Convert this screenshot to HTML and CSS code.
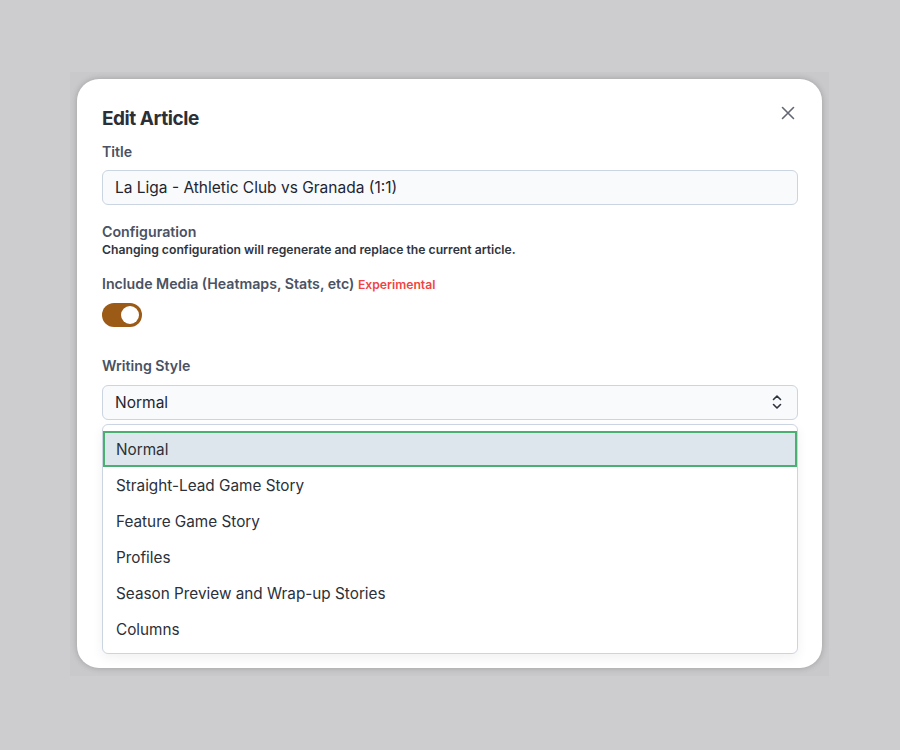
FILE: index.html
```html
<!DOCTYPE html>
<html>
<head>
<meta charset="utf-8">
<link rel="stylesheet" href="styles.css">
</head>
<body>
<div class="backdrop">
  <div class="modal">
    <div class="modal-head">
      <h2 class="modal-title">Edit Article</h2>
      <button class="close" aria-label="Close">
        <svg width="16" height="16" viewBox="0 0 16 16"><path d="M2.5 2.5 L13.5 13.5 M13.5 2.5 L2.5 13.5" stroke="#626873" stroke-width="1.6" stroke-linecap="round" fill="none"/></svg>
      </button>
    </div>

    <label class="label lbl-title">Title</label>
    <div class="input">La Liga - Athletic Club vs Granada (1:1)</div>

    <div class="section">
      <div class="label">Configuration</div>
      <div class="hint">Changing configuration will regenerate and replace the current article.</div>
    </div>

    <div class="label lbl-media">Include Media (Heatmaps, Stats, etc) <span class="exp">Experimental</span></div>
    <div class="toggle"><span class="knob"></span></div>

    <div class="label lbl-style">Writing Style</div>
    <div class="select">
      <span>Normal</span>
      <svg width="12" height="18" viewBox="0 0 12 18"><path d="M2.5 6.5 L6 3 L9.5 6.5 M2.5 11.5 L6 15 L9.5 11.5" stroke="#2f343d" stroke-width="1.6" stroke-linecap="round" stroke-linejoin="round" fill="none"/></svg>
    </div>
    <ul class="options">
      <li class="opt active">Normal</li>
      <li class="opt">Straight-Lead Game Story</li>
      <li class="opt">Feature Game Story</li>
      <li class="opt">Profiles</li>
      <li class="opt">Season Preview and Wrap-up Stories</li>
      <li class="opt">Columns</li>
    </ul>
  </div>
</div>
</body>
</html>
```

FILE: styles.css
```css
* { box-sizing: border-box; }
html, body { margin: 0; padding: 0; }
body {
  width: 900px;
  height: 750px;
  background: #cdcdcf;
  font-family: Inter, "Noto Sans", "Liberation Sans", sans-serif;
  overflow: hidden;
}
.backdrop {
  margin: 72px 0 0 70px;
  width: 759px;
  height: 604px;
  background: #c9c9cb;
  padding: 7px 7px 8px 7px;
}
.modal {
  background: #fff;
  border-radius: 22px;
  height: 589px;
  padding: 26px 24px 14px 25px;
  box-shadow: 0 0 6px rgba(0,0,0,0.22);
  display: flex;
  flex-direction: column;
}
.modal-head {
  display: flex;
  justify-content: space-between;
  align-items: flex-start;
}
.modal-title {
  margin: 0;
  font-size: 19px;
  line-height: 28px;
  font-weight: 700;
  color: #2b2f37;
  letter-spacing: -0.45px;
}
.close {
  border: 0;
  background: none;
  padding: 0;
  margin: 0 2px 0 0;
  width: 16px;
  height: 16px;
  display: block;
}
.close svg { display: block; }
.label {
  font-size: 14.2px;
  line-height: 20px;
  font-weight: 600;
  color: #4a5263;
}
.lbl-title { margin-top: 9px; display: block; }
.input {
  margin-top: 8px;
  height: 36px;
  border: 1px solid #cbd5e1;
  border-radius: 6px;
  background: #f8fafc;
  padding: 0 12px;
  display: flex;
  align-items: center;
  font-size: 15.5px;
  color: #1f2530;
}
.section { margin-top: 17px; }
.hint {
  font-size: 12.2px;
  line-height: 16px;
  font-weight: 600;
  color: #2f3540;
}
.lbl-media { margin-top: 16px; }
.exp {
  color: #ef4444;
  font-size: 12.2px;
  font-weight: 600;
}
.toggle {
  margin-top: 8px;
  width: 40px;
  height: 24px;
  border-radius: 12px;
  background: #9b5a16;
  display: flex;
  justify-content: flex-end;
  align-items: center;
  padding: 0 3px;
}
.knob {
  width: 18px;
  height: 18px;
  border-radius: 50%;
  background: #fff;
}
.lbl-style { margin-top: 29px; }
.select {
  margin-top: 9px;
  height: 36px;
  border: 1px solid #cbd5e1;
  border-radius: 6px;
  background: #f8fafc;
  padding: 0 14px 0 12px;
  display: flex;
  align-items: center;
  justify-content: space-between;
  font-size: 15.5px;
  color: #1f2530;
}
.select svg { display: block; }
.options {
  list-style: none;
  margin: 4px 0 0 0;
  padding: 6px 0;
  border: 1px solid #cbd5e1;
  border-radius: 6px;
  background: #fff;
  box-shadow: 0 4px 12px rgba(0,0,0,0.06);
}
.opt {
  height: 36px;
  display: flex;
  align-items: center;
  padding: 0 13px;
  font-size: 15.3px;
  color: #2b3039;
}
.opt.active {
  background: #dde6ed;
  border: 2px solid #4caf72;
  padding: 0 11px;
}
```
